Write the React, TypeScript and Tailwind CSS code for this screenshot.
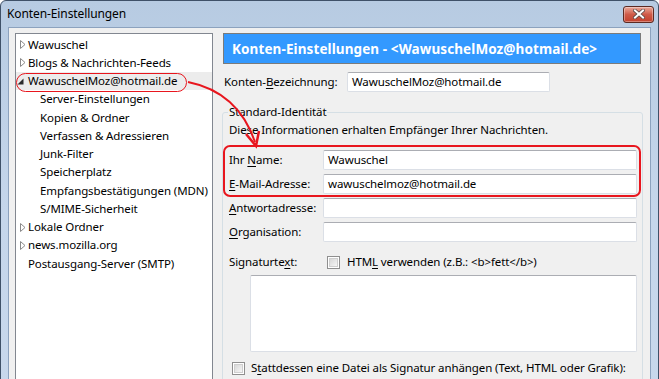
import React from "react"

const font = "font-['Noto_Sans',sans-serif]"

type Twisty = "closed" | "open" | "none"

function TwistyIcon({ kind }: { kind: Twisty }) {
  if (kind === "closed")
    return (
      <svg width="6" height="9" viewBox="0 0 6 9" className="ml-[4px] shrink-0">
        <path d="M0.5 0.5 L5 4.5 L0.5 8.5 Z" fill="#fff" stroke="#8a8a8a" strokeWidth="1" />
      </svg>
    )
  if (kind === "open")
    return (
      <svg width="7" height="7" viewBox="0 0 7 7" className="ml-[1px] shrink-0">
        <path d="M6.5 0.5 L6.5 6.5 L0.5 6.5 Z" fill="#2b2b2b" />
      </svg>
    )
  return null
}

type Row = { label: string; twisty: Twisty; indent?: boolean; selected?: boolean }

const rows: Row[] = [
  { label: "Wawuschel", twisty: "closed" },
  { label: "Blogs & Nachrichten-Feeds", twisty: "closed" },
  { label: "WawuschelMoz@hotmail.de", twisty: "open", selected: true },
  { label: "Server-Einstellungen", twisty: "none", indent: true },
  { label: "Kopien & Ordner", twisty: "none", indent: true },
  { label: "Verfassen & Adressieren", twisty: "none", indent: true },
  { label: "Junk-Filter", twisty: "none", indent: true },
  { label: "Speicherplatz", twisty: "none", indent: true },
  { label: "Empfangsbestätigungen (MDN)", twisty: "none", indent: true },
  { label: "S/MIME-Sicherheit", twisty: "none", indent: true },
  { label: "Lokale Ordner", twisty: "closed" },
  { label: "news.mozilla.org", twisty: "closed" },
  { label: "Postausgang-Server (SMTP)", twisty: "none" },
]

function TreeRow({ row }: { row: Row }) {
  return (
    <div className={`relative h-[18.25px] flex items-center ${row.selected ? "bg-[#ececec]" : ""}`}>
      <div className="w-[12px] flex items-center shrink-0">
        <TwistyIcon kind={row.twisty} />
      </div>
      <span className={`whitespace-nowrap ${row.indent ? "pl-[12px]" : ""}`}>{row.label}</span>
      {/* annotation ellipse */}
      {row.selected && (
        <div className="absolute left-0 top-[0.5px] w-[171px] h-[19px] rounded-[10px] border-[1.5px] border-[#e8161e]" />
      )}
    </div>
  )
}

function Acc({ children }: { children: React.ReactNode }) {
  return <span className="underline decoration-1 underline-offset-[2px]">{children}</span>
}

function TextField({ value, className = "" }: { value?: string; className?: string }) {
  return (
    <div
      className={`h-[20px] rounded-[2px] border border-[#dbdfe6] border-t-[#abadb3] bg-white flex items-center px-[4px] whitespace-nowrap ${className}`}
    >
      {value}
    </div>
  )
}

function CheckBox() {
  return (
    <div className="w-[13px] h-[13px] border border-[#8f8f8f] bg-white p-[1px] shrink-0">
      <div className="w-full h-full bg-gradient-to-br from-[#d8d8d8] to-[#f6f6f6] border border-[#cfcfcf]" />
    </div>
  )
}

function FieldRow({ label, value }: { label: React.ReactNode; value?: string }) {
  return (
    <div className="flex items-center h-[20px]">
      <div className="w-[94px] shrink-0 whitespace-nowrap">{label}</div>
      <TextField value={value} className="flex-1 min-w-0" />
    </div>
  )
}

export default function App() {
  return (
    <div
      className={`relative w-[659px] h-[379px] overflow-hidden bg-white text-[11.5px] tracking-[-0.1px] leading-[16px] text-black ${font}`}
    >
      <div className="h-[420px] flex flex-col border border-[#3f5168] rounded-t-[6px] bg-gradient-to-b from-[#b7cbe2] via-[#c5d6eb] to-[#c8d8ec]">
        {/* title bar */}
        <div className="h-[26px] flex items-center pl-[6px] pr-[4px] shrink-0">
          <span className="flex-1 text-[12px]">Konten-Einstellungen</span>
          <div className="w-[31px] h-[17px] rounded-[3px] border border-[#5c2a22] bg-gradient-to-b from-[#e9a99b] via-[#cf5a48] to-[#c2402c] flex items-center justify-center shadow-[inset_0_0_0_1px_rgba(255,255,255,0.35)]">
            <svg width="12" height="10" viewBox="0 0 12 10">
              <path d="M2 1.5 L10 8.5 M10 1.5 L2 8.5" stroke="#5a4a48" strokeWidth="3.6" strokeLinecap="square" />
              <path d="M2 1.5 L10 8.5 M10 1.5 L2 8.5" stroke="#fff" strokeWidth="2" strokeLinecap="square" />
            </svg>
          </div>
        </div>

        {/* client area */}
        <div className="flex-1 mx-[7px] border border-[#8ca2be] bg-[#f0f0f0] flex pl-[6px] pt-[5px]">
          {/* tree */}
          <div className="w-[198px] border border-[#828790] bg-white pt-[1.5px] shrink-0">
            {rows.map((r) => (
              <TreeRow key={r.label} row={r} />
            ))}
          </div>

          {/* settings pane */}
          <div className="w-[421px] ml-[9px] flex flex-col shrink-0">
            <div className="ml-[1px] mr-[2px] h-[31px] border border-[#7b7b7b] bg-[#3399ff] flex items-center pl-[8px]">
              <span className="text-white font-bold text-[13.5px] tracking-[0.1px] whitespace-nowrap">
                Konten-Einstellungen - &lt;WawuschelMoz@hotmail.de&gt;
              </span>
            </div>

            <div className="mt-[8px] h-[20px] flex items-center">
              <span className="pl-[2px] w-[125px] whitespace-nowrap">
                Konten-<Acc>B</Acc>ezeichnung:
              </span>
              <TextField value="WawuschelMoz@hotmail.de" className="w-[203px]" />
            </div>

            <fieldset className="mt-[12px] min-w-0 w-[421px] border border-[#d5dfe5] rounded-[3px] pl-[6px] pr-[5px] pb-[20px]">
              <legend className="ml-[-1px] px-[1px] leading-[16px]">Standard-Identität</legend>
              <div className="mt-[2px]">Diese Informationen erhalten Empfänger Ihrer Nachrichten.</div>

              <div className="relative mt-[12px] flex flex-col gap-[4px]">
                <FieldRow label={<>Ihr <Acc>N</Acc>ame:</>} value="Wawuschel" />
                <FieldRow label={<><Acc>E</Acc>-Mail-Adresse:</>} value="wawuschelmoz@hotmail.de" />
                {/* annotation frame */}
                <div className="absolute left-[-6px] top-[-5px] w-[418px] h-[52px] rounded-[7px] border-2 border-[#e8161e]" />
              </div>
              <div className="mt-[4px] flex flex-col gap-[4px]">
                <FieldRow label={<><Acc>A</Acc>ntwortadresse:</>} />
                <FieldRow label={<><Acc>O</Acc>rganisation:</>} />
              </div>

              <div className="mt-[10px] h-[20px] flex items-center">
                <span className="w-[98px] shrink-0 whitespace-nowrap">
                  Signaturte<Acc>x</Acc>t:
                </span>
                <CheckBox />
                <span className="ml-[7px] whitespace-nowrap">
                  HTM<Acc>L</Acc> verwenden (z.B.: &lt;b&gt;fett&lt;/b&gt;)
                </span>
              </div>

              <div className="mt-[3px] ml-[21px] h-[77px] rounded-[2px] border border-[#dbdfe6] border-t-[#abadb3] bg-white" />

              <div className="mt-[8px] ml-[3px] h-[16px] flex items-center">
                <CheckBox />
                <span className="ml-[6px] whitespace-nowrap">
                  S<Acc>t</Acc>attdessen eine Datei als Signatur anhängen (Text, HTML oder Grafik):
                </span>
              </div>
            </fieldset>
          </div>
        </div>
      </div>

      {/* annotation arrow */}
      <svg className="absolute inset-0 pointer-events-none" width="659" height="379" viewBox="0 0 659 379">
        <path d="M188 82 Q 238 92 255 142" fill="none" stroke="#e8161e" strokeWidth="2" />
        <path d="M246 134 L256 146 L259 131" fill="none" stroke="#e8161e" strokeWidth="2.5" strokeLinejoin="miter" />
      </svg>
    </div>
  )
}
